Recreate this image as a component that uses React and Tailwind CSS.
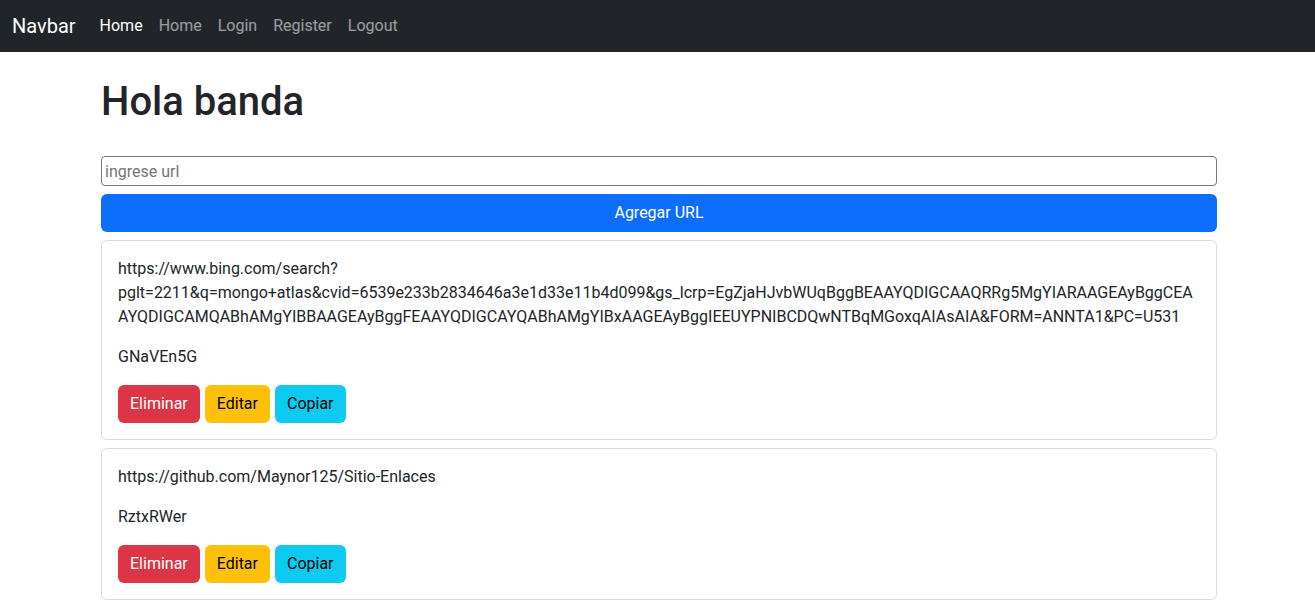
const links = [
  { url: 'https://www.bing.com/search?pglt=2211&q=mongo+atlas&cvid=6539e233b2834646a3e1d33e11b4d099&gs_lcrp=EgZjaHJvbWUqBggBEAAYQDIGCAAQRRg5MgYIARAAGEAyBggCEAAYQDIGCAMQABhAMgYIBBAAGEAyBggFEAAYQDIGCAYQABhAMgYIBxAAGEAyBggIEEUYPNIBCDQwNTBqMGoxqAIAsAIA&FORM=ANNTA1&PC=U531', code: 'GNaVEn5G' },
  { url: 'https://github.com/Maynor125/Sitio-Enlaces', code: 'RztxRWer' },
];

function Navbar() {
  return (
    <nav className="h-[52px] bg-[#212529] flex items-center px-3">
      <span className="text-white text-xl mr-4">Navbar</span>
      <ul className="flex items-center">
        <li className="px-2 text-white">Home</li>
        <li className="px-2 text-white/55">Home</li>
        <li className="px-2 text-white/55">Login</li>
        <li className="px-2 text-white/55">Register</li>
        <li className="px-2 text-white/55">Logout</li>
      </ul>
    </nav>
  );
}

function LinkCard({ url, code }) {
  return (
    <div className="mt-2 border border-[#dadcdf] rounded-md p-4">
      <p className="break-words leading-6 mb-4">{url}</p>
      <p className="leading-6 mb-4">{code}</p>
      <div className="flex gap-[5px]">
        <button className="px-3 py-1.5 leading-[26px] rounded-md bg-[#dc3545] text-white">Eliminar</button>
        <button className="px-3 py-1.5 leading-[26px] rounded-md bg-[#ffc107] text-black">Editar</button>
        <button className="px-3 py-1.5 leading-[26px] rounded-md bg-[#0dcaf0] text-black">Copiar</button>
      </div>
    </div>
  );
}

export default function App() {
  return (
    <div className="min-h-screen bg-white text-[#212529] text-base font-['Roboto',sans-serif]">
      <Navbar />
      <main className="w-[1116px] ml-[101px]">
        <h1 className="text-[40px] font-medium leading-[48px] mt-[26px]">Hola banda</h1>
        <input
          className="mt-[30px] w-full h-[30px] border border-[#767676] rounded-sm px-[3px] placeholder:text-[#757575] outline-none"
          placeholder="ingrese url"
        />
        <button className="mt-2 w-full h-[38px] rounded-md bg-[#0d6efd] text-white">Agregar URL</button>
        {links.map(l => (
          <LinkCard key={l.code} url={l.url} code={l.code} />
        ))}
      </main>
    </div>
  );
}
